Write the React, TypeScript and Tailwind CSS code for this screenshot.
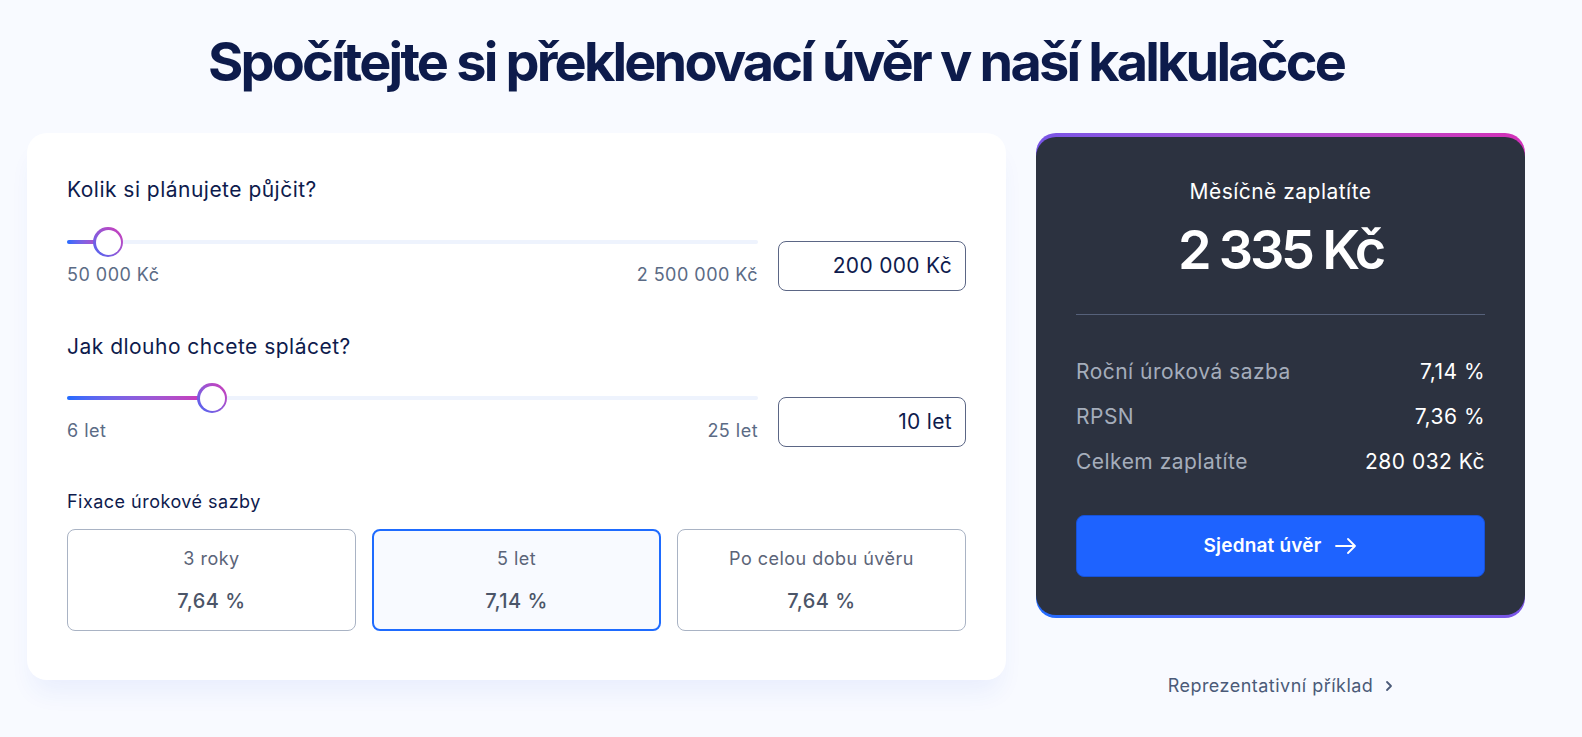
import React from "react";

interface Option {
  label: string;
  rate: string;
}

const options: Option[] = [
  { label: "3 roky", rate: "7,64 %" },
  { label: "5 let", rate: "7,14 %" },
  { label: "Po celou dobu úvěru", rate: "7,64 %" },
];

const summary = [
  { label: "Roční úroková sazba", value: "7,14 %" },
  { label: "RPSN", value: "7,36 %" },
  { label: "Celkem zaplatíte", value: "280 032 Kč" },
];

const Slider = ({
  percent,
  min,
  max,
  value,
}: {
  percent: number;
  min: string;
  max: string;
  value: string;
}) => (
  <div className="flex items-start gap-5">
    <div className="flex-1">
      <div className="relative h-[30px]">
        <div className="absolute left-0 right-0 top-[13px] h-[4px] rounded-full bg-[#eef3fd]" />
        <div
          className="absolute left-0 top-[13px] h-[4px] rounded-full bg-gradient-to-r from-[#1e6bff] to-[#d22fb6]"
          style={{ width: `${percent}%` }}
        />
        <div
          className="absolute top-0 h-[30px] w-[30px] -translate-x-1/2 rounded-full bg-gradient-to-tr from-[#3d63f5] to-[#d22fb6] p-[2.5px]"
          style={{ left: `${percent}%` }}
        >
          <div className="h-full w-full rounded-full bg-white" />
        </div>
      </div>
      <div className="mt-[6px] flex justify-between text-[18px] leading-6 text-[#5b6b85]">
        <span>{min}</span>
        <span>{max}</span>
      </div>
    </div>
    <div className="mt-[14px] flex h-[50px] w-[188px] items-center justify-end rounded-lg border border-[#5b6685] pr-[13px] text-[21px] tracking-[0.015em] text-[#0e1b4d]">
      {value}
    </div>
  </div>
);

const App = () => {
  return (
    <div
      className="min-h-[737px] bg-[#f8faff] pb-10 tracking-[0.03em]"
      style={{ fontFamily: "Inter, 'Noto Sans', sans-serif" }}
    >
      <div className="ml-[27px] w-[1498px]">
        <h1 className="pt-[29px] text-center text-[54px] font-bold leading-[66px] tracking-[-0.052em] text-[#0d1b4b]">
          Spočítejte si překlenovací úvěr v naší kalkulačce
        </h1>

        <div className="mt-[38px] flex items-start gap-[30px]">
          {/* left card */}
          <div className="w-[979px] rounded-[20px] bg-white px-10 pb-[49px] pt-[43px] shadow-[0_18px_24px_-6px_rgba(40,90,220,0.07)]">
            <div className="text-[21px] leading-7 text-[#0e1b4d]">Kolik si plánujete půjčit?</div>
            <div className="mt-[23px]">
              <Slider percent={6} min="50 000 Kč" max="2 500 000 Kč" value="200 000 Kč" />
            </div>

            <div className="mt-[42px] text-[21px] leading-7 text-[#0e1b4d]">Jak dlouho chcete splácet?</div>
            <div className="mt-[22px]">
              <Slider percent={21} min="6 let" max="25 let" value="10 let" />
            </div>

            <div className="mt-[43px] text-[18px] leading-6 text-[#0e1b4d]">Fixace úrokové sazby</div>
            <div className="mt-[15px] grid grid-cols-3 gap-[16px]">
              {options.map((o, i) => (
                <div
                  key={o.label}
                  className={
                    i === 1
                      ? "flex h-[102px] flex-col items-center justify-center gap-[18px] rounded-lg border-2 border-[#1e6bff] bg-[#f8faff]"
                      : "flex h-[102px] flex-col items-center justify-center gap-[18px] rounded-lg border border-[#a9b3c4] bg-white"
                  }
                >
                  <span className="text-[18px] leading-6 text-[#5b6478]">{o.label}</span>
                  <span className="text-[20px] font-medium leading-6 text-[#4b5568]">{o.rate}</span>
                </div>
              ))}
            </div>
          </div>

          {/* right column */}
          <div className="w-[489px]">
            <div className="rounded-[20px] bg-gradient-to-tr from-[#1e6bff] via-[#7a55e6] to-[#d42fb8] pb-[3px] pt-[4px]">
              <div className="rounded-[20px] bg-[#2c3240] px-10 pb-[38px] pt-[41px]">
                <div className="text-center text-[21px] leading-7 text-white">Měsíčně zaplatíte</div>
                <div className="mt-[12px] text-center text-[54px] font-semibold leading-[64px] tracking-[-0.06em] text-white">
                  2 335 Kč
                </div>
                <div className="mt-[32px] h-px bg-[#56617a]" />
                <div className="mt-[43px] flex flex-col gap-[17px]">
                  {summary.map((s) => (
                    <div key={s.label} className="flex items-center justify-between text-[21px] leading-7">
                      <span className="text-[#a5adbb]">{s.label}</span>
                      <span className="text-white">{s.value}</span>
                    </div>
                  ))}
                </div>
                <button
                  type="button"
                  className="mt-[39px] flex h-[62px] w-full items-center justify-center gap-[14px] rounded-lg border border-[#1652d8] bg-[#1e63ff] text-[19px] font-semibold tracking-[0.01em] text-white"
                >
                  Sjednat úvěr
                  <svg width="22" height="16" viewBox="0 0 22 16" fill="none" stroke="currentColor" strokeWidth="1.8" strokeLinecap="round" strokeLinejoin="round">
                    <path d="M1 8h19M13 1l7 7-7 7" />
                  </svg>
                </button>
              </div>
            </div>
            <div className="mt-[56px] flex items-center justify-center gap-3 text-[18px] leading-6 text-[#4b5a78]">
              Reprezentativní příklad
              <svg width="8" height="12" viewBox="0 0 8 12" fill="none" stroke="currentColor" strokeWidth="1.8" strokeLinecap="round" strokeLinejoin="round">
                <path d="M2 2l4 4-4 4" />
              </svg>
            </div>
          </div>
        </div>
      </div>
    </div>
  );
};

export default App;
